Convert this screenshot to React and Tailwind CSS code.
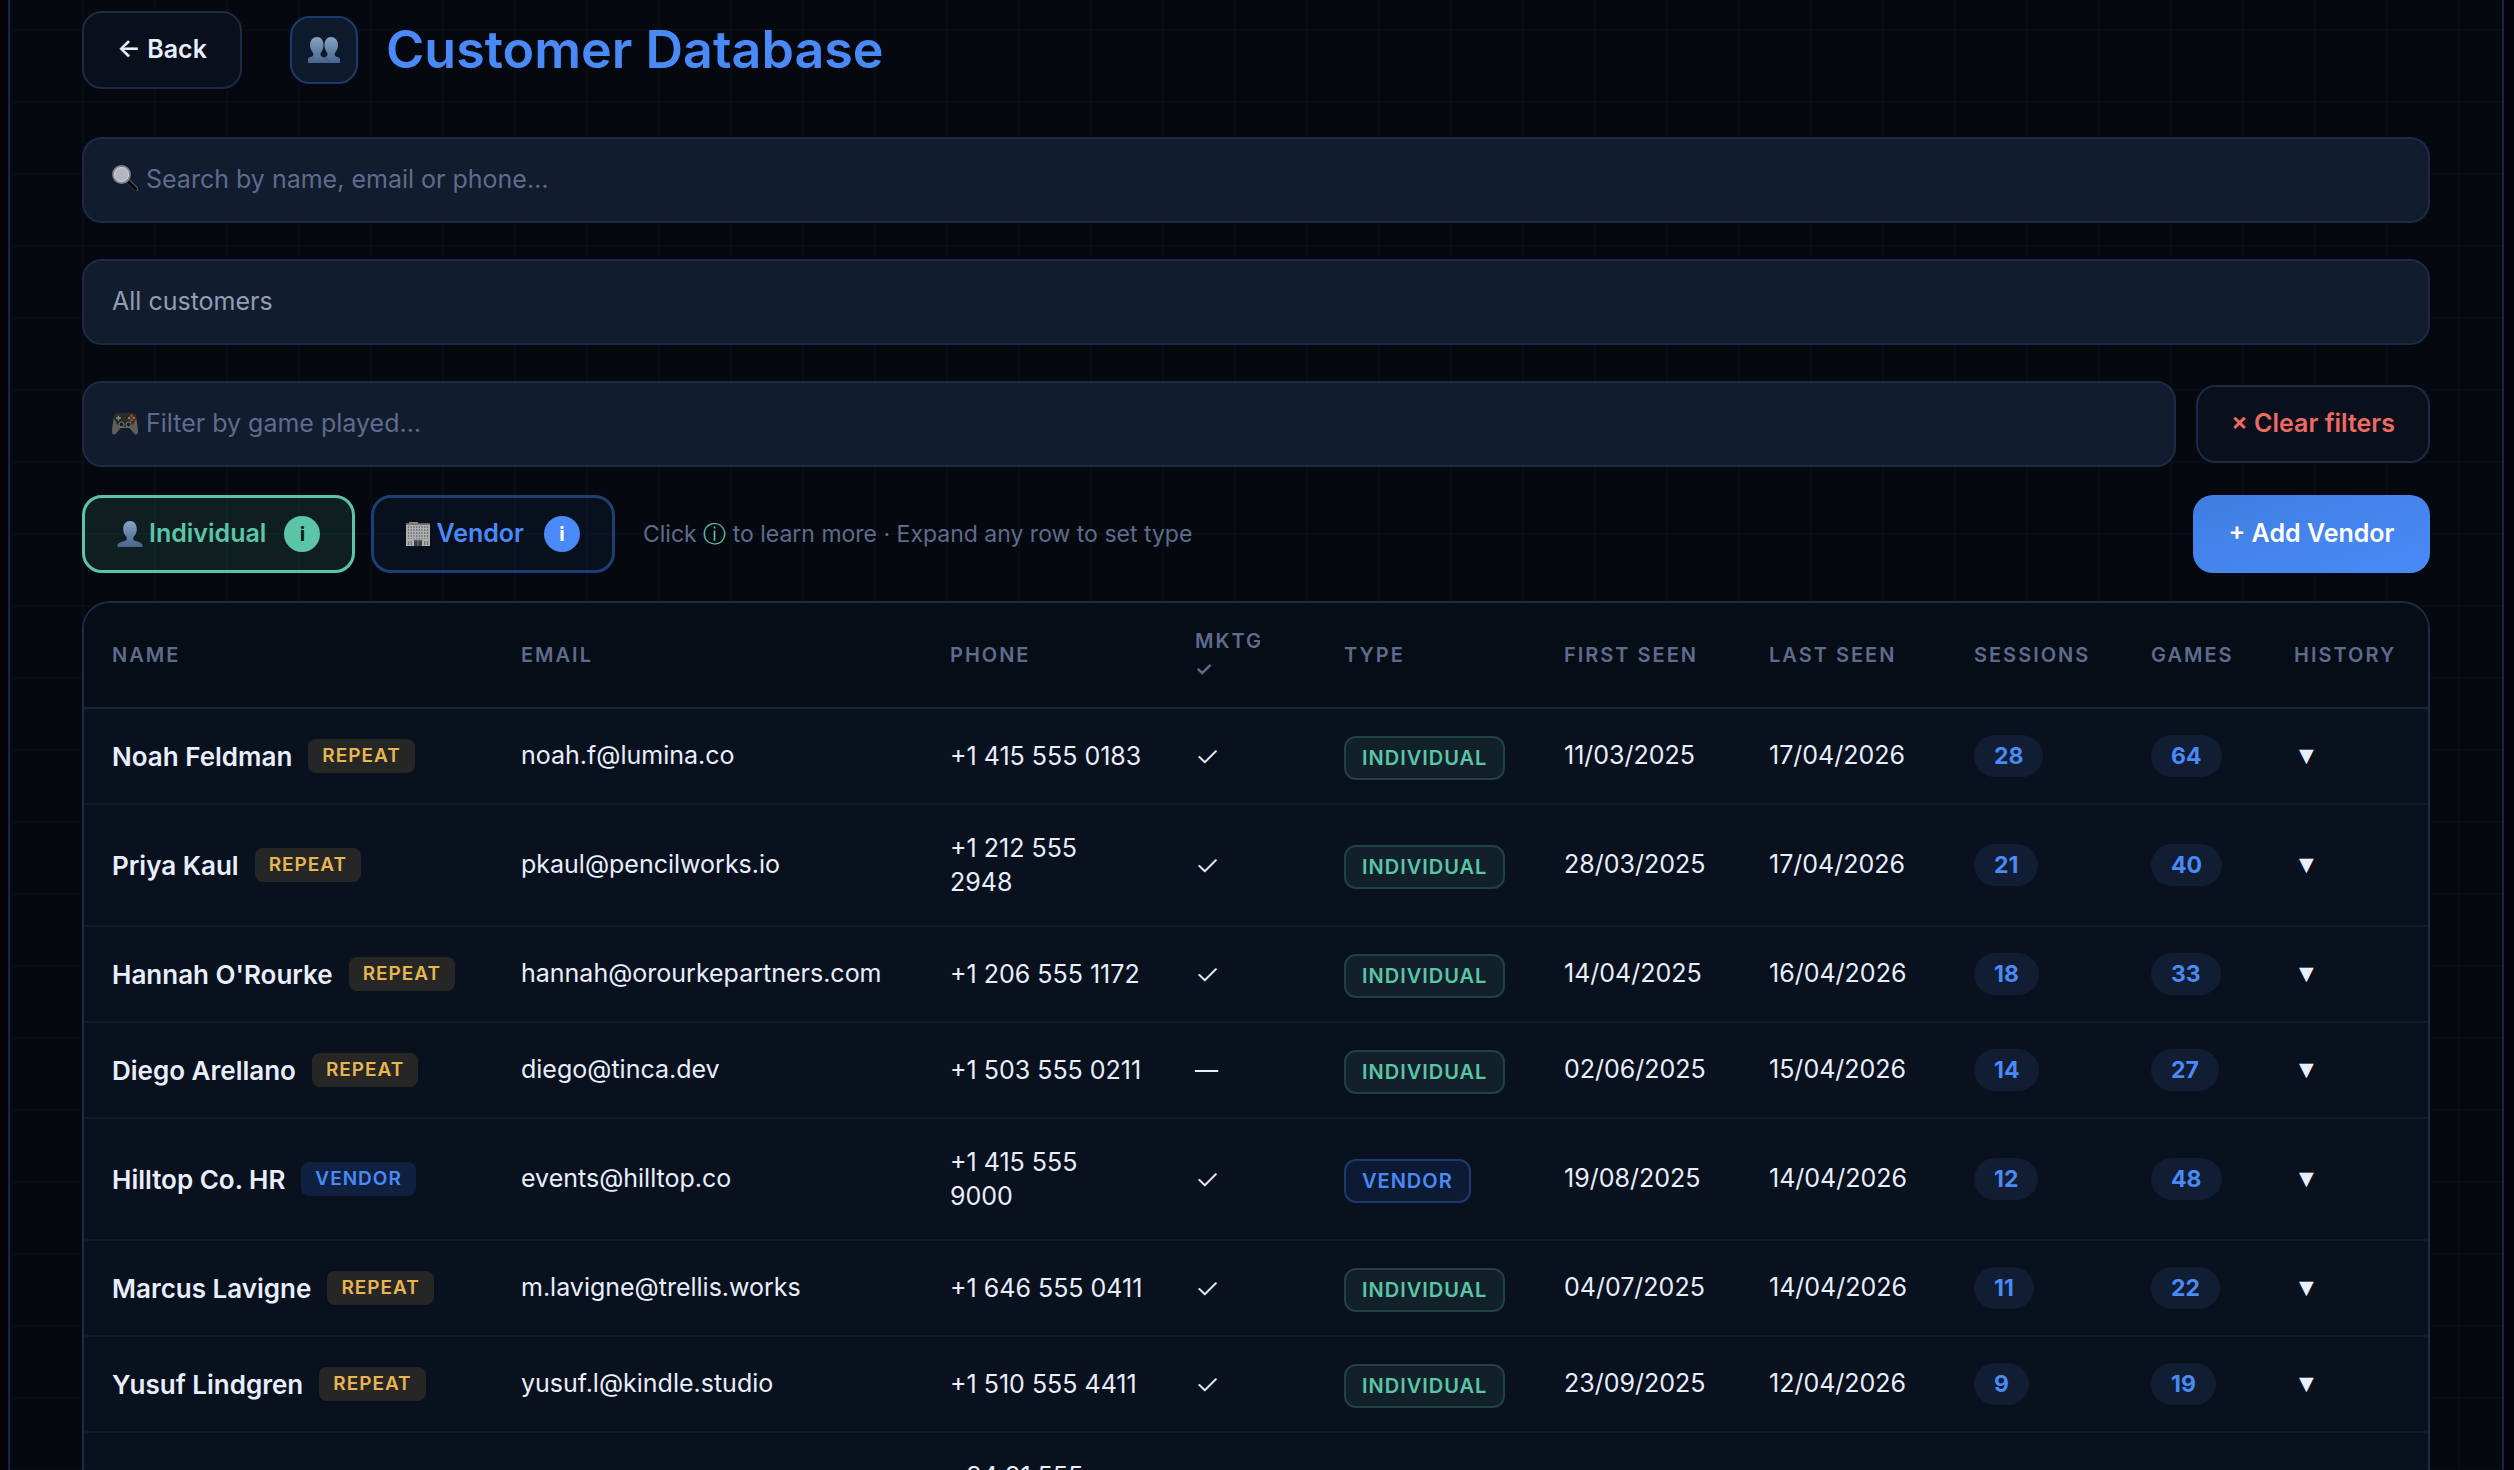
import { useState } from "react";

const customers = [
  { name: "Noah Feldman", tag: "Repeat", email: "noah.f@lumina.co", phone: ["+1 415 555 0183"], mktg: true, type: "Individual", first: "11/03/2025", last: "17/04/2026", sessions: 28, games: 64 },
  { name: "Priya Kaul", tag: "Repeat", email: "pkaul@pencilworks.io", phone: ["+1 212 555", "2948"], mktg: true, type: "Individual", first: "28/03/2025", last: "17/04/2026", sessions: 21, games: 40 },
  { name: "Hannah O'Rourke", tag: "Repeat", email: "hannah@orourkepartners.com", phone: ["+1 206 555 1172"], mktg: true, type: "Individual", first: "14/04/2025", last: "16/04/2026", sessions: 18, games: 33 },
  { name: "Diego Arellano", tag: "Repeat", email: "diego@tinca.dev", phone: ["+1 503 555 0211"], mktg: false, type: "Individual", first: "02/06/2025", last: "15/04/2026", sessions: 14, games: 27 },
  { name: "Hilltop Co. HR", tag: "Vendor", email: "events@hilltop.co", phone: ["+1 415 555", "9000"], mktg: true, type: "Vendor", first: "19/08/2025", last: "14/04/2026", sessions: 12, games: 48 },
  { name: "Marcus Lavigne", tag: "Repeat", email: "m.lavigne@trellis.works", phone: ["+1 646 555 0411"], mktg: true, type: "Individual", first: "04/07/2025", last: "14/04/2026", sessions: 11, games: 22 },
  { name: "Yusuf Lindgren", tag: "Repeat", email: "yusuf.l@kindle.studio", phone: ["+1 510 555 4411"], mktg: true, type: "Individual", first: "23/09/2025", last: "12/04/2026", sessions: 9, games: 19 },
  { name: "Elena Marin", tag: "Repeat", email: "elena@marin.es", phone: ["+34 91 555", "0142"], mktg: true, type: "Individual", first: "08/10/2025", last: "11/04/2026", sessions: 8, games: 16 },
];

const columns = [
  { label: "Name", width: "w-[409px]" },
  { label: "Email", width: "w-[429px]" },
  { label: "Phone", width: "w-[245px]" },
  { label: "Mktg ✓", width: "w-[149px] pr-9" },
  { label: "Type", width: "w-[220px]" },
  { label: "First seen", width: "w-[205px]" },
  { label: "Last seen", width: "w-[205px]" },
  { label: "Sessions", width: "w-[177px]" },
  { label: "Games", width: "w-[143px]" },
  { label: "History", width: "w-[162px]" },
];

function BustGradient({ id }) {
  return (
    <linearGradient id={id} x1="0" y1="0" x2="0" y2="1">
      <stop offset="0" stopColor="#86a3c3" />
      <stop offset="1" stopColor="#48648c" />
    </linearGradient>
  );
}

function PeopleIcon() {
  return (
    <svg viewBox="0 0 32 26" className="h-[26px] w-8" aria-hidden="true">
      <defs>
        <BustGradient id="people" />
      </defs>
      <path
        d="M9 0c4 0 6.500 3.500 6.500 8 0 3-1 5.500-2.500 7.500-.8 1.200-.6 3.500.6 4 1 .4 1.700.6 2.400.9.700-.3 1.500-.5 2.400-.9 1.200-.5 1.400-2.800.6-4C17.500 13.500 16.500 11 16.500 8c0-4.500 2.500-8 6.500-8s7 3.500 7 8c0 3-1.300 5.500-2.800 7.500-.8 1.200-.6 3.500.6 4 2 .7 4.200.8 4.200 3V26H0v-3.500c0-2.200 2.200-2.300 4.200-3 1.200-.5 1.400-2.800.6-4C3.300 13.500 2 11 2 8c0-4.500 3-8 7-8z"
        fill="url(#people)"
      />
      <path d="M15 20.500c3 .6 4.500 1.500 5.500 4" fill="none" stroke="#38547a" strokeWidth="0.800" />
    </svg>
  );
}

function PersonIcon() {
  return (
    <svg viewBox="0 0 26 26" className="size-[26px]" aria-hidden="true">
      <defs>
        <BustGradient id="person" />
      </defs>
      <path
        d="M13 0c4.200 0 6.800 3.300 6.800 8 0 3-1.200 5.700-3 7.500-.9 1-.9 3.300.4 3.900 2.800 1.200 8.300 1.800 8.300 5.200V26H.5v-1.400c0-3.400 5.500-4 8.300-5.200 1.300-.6 1.300-2.900.4-3.900-1.800-1.800-3-4.500-3-7.500 0-4.700 2.600-8 6.800-8z"
        fill="url(#person)"
      />
    </svg>
  );
}

function SearchIcon() {
  return (
    <svg viewBox="0 0 26 26" className="mb-1 size-[26px]" aria-hidden="true">
      <path d="M16 16l8 8" stroke="#50545c" strokeWidth="4.800" strokeLinecap="round" />
      <path d="M16.500 17l7 7" stroke="#08090c" strokeWidth="3.200" strokeLinecap="round" />
      <circle cx="9.500" cy="9.500" r="8.500" fill="#b3b6bc" stroke="#7b8695" strokeWidth="1.800" />
      <circle cx="9.500" cy="9.500" r="7" fill="none" stroke="#d3d5d9" strokeWidth="0.800" />
    </svg>
  );
}

function GamepadIcon() {
  return (
    <svg viewBox="0 0 26 22" className="h-[22px] w-[26px]" aria-hidden="true">
      <path
        d="M5 .5c2-.7 4-.5 5 .2h6c1-.7 3-.9 5-.2 2.500.8 3 3 3.500 6 .8 4.500 1.500 9 1.500 12.500 0 2.500-2.500 3.500-4 1.500L17.500 15h-9L4 20.500c-1.500 2-4 1-4-1.500C0 15.500.7 11 1.500 6.500 2 3.500 2.500 1.300 5 .5z"
        fill="#5f6059"
      />
      <path d="M5 .5c2-.7 4-.5 5 .2h6c1-.7 3-.9 5-.2 2 .6 2.800 2.200 3.300 4.500L21 11l-3 3H8l-3-3L1.700 5C2.200 2.700 3 1.100 5 .5z" fill="#2b2b2b" />
      <path d="M6.500 2.500v5M4 5h5" stroke="#8b8b86" strokeWidth="1.400" />
      <circle cx="9.500" cy="11.500" r="2.500" fill="#1d1d1d" stroke="#8b8b86" strokeWidth="0.900" />
      <circle cx="16.500" cy="11.500" r="2.500" fill="#1d1d1d" stroke="#8b8b86" strokeWidth="0.900" />
      <circle cx="19.500" cy="2.800" r="1.200" fill="#c8502c" />
      <circle cx="17.300" cy="5" r="1.200" fill="#8b8b86" />
      <circle cx="21.700" cy="5" r="1.200" fill="#e06a35" />
      <circle cx="19.500" cy="7.200" r="1.200" fill="#c8502c" />
    </svg>
  );
}

function BuildingIcon() {
  return (
    <svg viewBox="0 0 24 24" className="size-6" aria-hidden="true">
      <path d="M3 0h9v2H3z" fill="#8a8580" />
      <path d="M0 1.500h24V24H0z" fill="#b3afa9" />
      <path d="M0 1.500h24v1.300H0z" fill="#6d5f5a" />
      <path
        d="M2.500 4v13M5.200 4v13M8 4v13M10.700 4v13M13.400 4v13M16 4v13M18.800 4v13M21.500 4v13"
        stroke="#66788a"
        strokeWidth="1.300"
        strokeDasharray="2 1"
      />
      <path d="M8 18h8v6H8z" fill="#39424c" />
      <path d="M12 18v6M7 18h10" stroke="#8a8580" strokeWidth="0.800" />
      <path d="M2.500 19v4M5.200 19v4M18.800 19v4M21.500 19v4" stroke="#66788a" strokeWidth="1.300" />
    </svg>
  );
}

function NameTag({ children }) {
  const color = children === "Vendor" ? "bg-[#102040] text-[#4a8af4]" : "bg-[#262627] text-[#e8b650]";
  return (
    <span className={`rounded-lg px-[14px] text-[19px] leading-[34px] font-semibold tracking-[1px] uppercase ${color}`}>
      {children}
    </span>
  );
}

function TypeBadge({ children }) {
  const color =
    children === "Vendor"
      ? "border-[#1c3a6e] bg-[#0d1a33] text-[#4a8af4]"
      : "border-[#1f4243] bg-[#12202a] text-[#5bc5a7]";
  return (
    <span className={`inline-block rounded-xl border-2 px-4 text-[20px] leading-10 font-semibold tracking-[1px] uppercase ${color}`}>
      {children}
    </span>
  );
}

function Count({ children }) {
  return (
    <span className="inline-block rounded-full bg-[#101d33] px-5 text-[23px] leading-[42px] font-bold text-[#4a8af4]">
      {children}
    </span>
  );
}

export default function App() {
  const [search, setSearch] = useState("");
  const [game, setGame] = useState("");
  const [type, setType] = useState("all");

  const clearFilters = () => {
    setSearch("");
    setGame("");
    setType("all");
  };

  return (
    <div className="h-screen overflow-hidden bg-[#02040a] pr-[10px] pl-2 font-['Inter',sans-serif] text-[25px] text-[#e8eefc]">
      <main className="min-h-screen border-x-2 border-[#1b2540] bg-[#05090f] bg-[linear-gradient(#070c16_2px,transparent_2px),linear-gradient(90deg,#070c16_2px,transparent_2px)] bg-[size:72px_72px] bg-[position:0_29px] px-[72px] pt-[11px]">
        <header className="mb-12 flex items-center">
          <button
            type="button"
            className="mr-12 h-[78px] min-w-40 rounded-[20px] border-2 border-[#1e2a45] bg-[#0a101b] px-8 font-semibold whitespace-nowrap"
          >
            ← Back
          </button>
          <div className="mr-7 flex size-[68px] items-center justify-center rounded-[20px] border-2 border-[#1c3a6b] bg-[#0d1a2c]">
            <PeopleIcon />
          </div>
          <h1 className="text-[52px] leading-[68px] font-semibold text-[#4a8af8]">Customer Database</h1>
        </header>

        <label className="mb-9 flex h-[86px] items-center gap-2 rounded-[20px] border-2 border-[#1e2a45] bg-[#111c2f] px-7">
          <SearchIcon />
          <input
            type="text"
            aria-label="Search customers"
            value={search}
            onChange={(e) => setSearch(e.target.value)}
            placeholder="Search by name, email or phone…"
            className="flex-1 outline-none placeholder:text-[#5f6b8c]"
          />
        </label>

        <select
          aria-label="Customer type"
          value={type}
          onChange={(e) => setType(e.target.value)}
          className="mb-9 block h-[86px] w-full appearance-none rounded-[20px] border-2 border-[#1e2a45] bg-[#111c2f] px-7 text-[#939cb5]"
        >
          <option value="all">All customers</option>
          <option value="individual">Individual</option>
          <option value="vendor">Vendor</option>
        </select>

        <div className="mb-7 flex items-center gap-5">
          <label className="flex h-[86px] flex-1 items-center gap-2 rounded-[20px] border-2 border-[#1e2a45] bg-[#111c2f] px-7">
            <GamepadIcon />
            <input
              type="text"
              aria-label="Filter by game"
              value={game}
              onChange={(e) => setGame(e.target.value)}
              placeholder="Filter by game played…"
              className="flex-1 outline-none placeholder:text-[#5f6b8c]"
            />
          </label>
          <button
            type="button"
            onClick={clearFilters}
            className="h-[78px] min-w-[234px] rounded-[20px] border-2 border-[#1e2a45] bg-[#0a101b] font-semibold text-[#ee6a63]"
          >
            × Clear filters
          </button>
        </div>

        <div className="mb-7 flex items-center">
          <button
            type="button"
            className="mr-4 flex h-[78px] items-center rounded-[20px] border-3 border-[#5bc5a7] bg-[#5bc5a7]/12 px-8 font-semibold text-[#5bc5a7]"
          >
            <PersonIcon />
            <span className="mr-[18px] ml-1.5">Individual</span>
            <span className="size-9 rounded-full bg-[#5bc5a7] text-[20px] leading-9 font-bold text-[#0b1a1c]">i</span>
          </button>
          <button
            type="button"
            className="mr-7 flex h-[78px] items-center rounded-[20px] border-3 border-[#1d3f75] bg-[#4a8af8]/6 px-8 font-semibold text-[#4a8af8]"
          >
            <BuildingIcon />
            <span className="mr-5 ml-1.5">Vendor</span>
            <span className="size-9 rounded-full bg-[#4a8af8] text-[20px] leading-9 font-bold text-white">i</span>
          </button>
          <p className="text-[23px] text-[#5f6b8c]">
            Click <span className="text-[#5bc5a7]">ⓘ</span> to learn more · Expand any row to set type
          </p>
          <button
            type="button"
            className="ml-auto h-[78px] min-w-[237px] rounded-[20px] bg-linear-to-br from-[#3f7ee0] to-[#4a8af8] font-semibold text-white"
          >
            + Add Vendor
          </button>
        </div>

        <div className="overflow-hidden rounded-[28px] border-2 border-[#1e2a45] bg-[#0a111e]">
          <table className="w-full table-fixed text-left">
            <thead className="bg-[#070d17] text-[#5f6b8c]">
              <tr>
                {columns.map((col) => (
                  <th
                    key={col.label}
                    className={`h-[105px] border-b-2 border-[#1a2440] pl-7 text-[20px] leading-7 font-semibold tracking-[2px] uppercase ${col.width}`}
                  >
                    {col.label}
                  </th>
                ))}
              </tr>
            </thead>
            <tbody>
              {customers.map((c) => (
                <tr key={c.email} className="border-b-2 border-[#131a27]">
                  <td className="h-24 pl-7">
                    <div className="flex items-center gap-4 whitespace-nowrap">
                      <span className="text-[26px] font-semibold">{c.name}</span>
                      <NameTag>{c.tag}</NameTag>
                    </div>
                  </td>
                  <td className="pl-7">{c.email}</td>
                  <td className="py-[26px] pl-7 leading-[34px] whitespace-nowrap">
                    {c.phone.map((line) => (
                      <div key={line}>{line}</div>
                    ))}
                  </td>
                  <td className={c.mktg ? "pl-7 text-[28px] leading-[34px] font-light" : "pl-7 text-[23px]"}>
                    {c.mktg ? "✓" : "—"}
                  </td>
                  <td className="pt-1 pl-7">
                    <TypeBadge>{c.type}</TypeBadge>
                  </td>
                  <td className="pl-7">{c.first}</td>
                  <td className="pl-7">{c.last}</td>
                  <td className="pl-7">
                    <Count>{c.sessions}</Count>
                  </td>
                  <td className="pl-7">
                    <Count>{c.games}</Count>
                  </td>
                  <td className="pl-7">
                    <button type="button" aria-label={`Show history for ${c.name}`} className="font-['Liberation_Sans',sans-serif]">
                      ▼
                    </button>
                  </td>
                </tr>
              ))}
            </tbody>
          </table>
        </div>
      </main>
    </div>
  );
}
